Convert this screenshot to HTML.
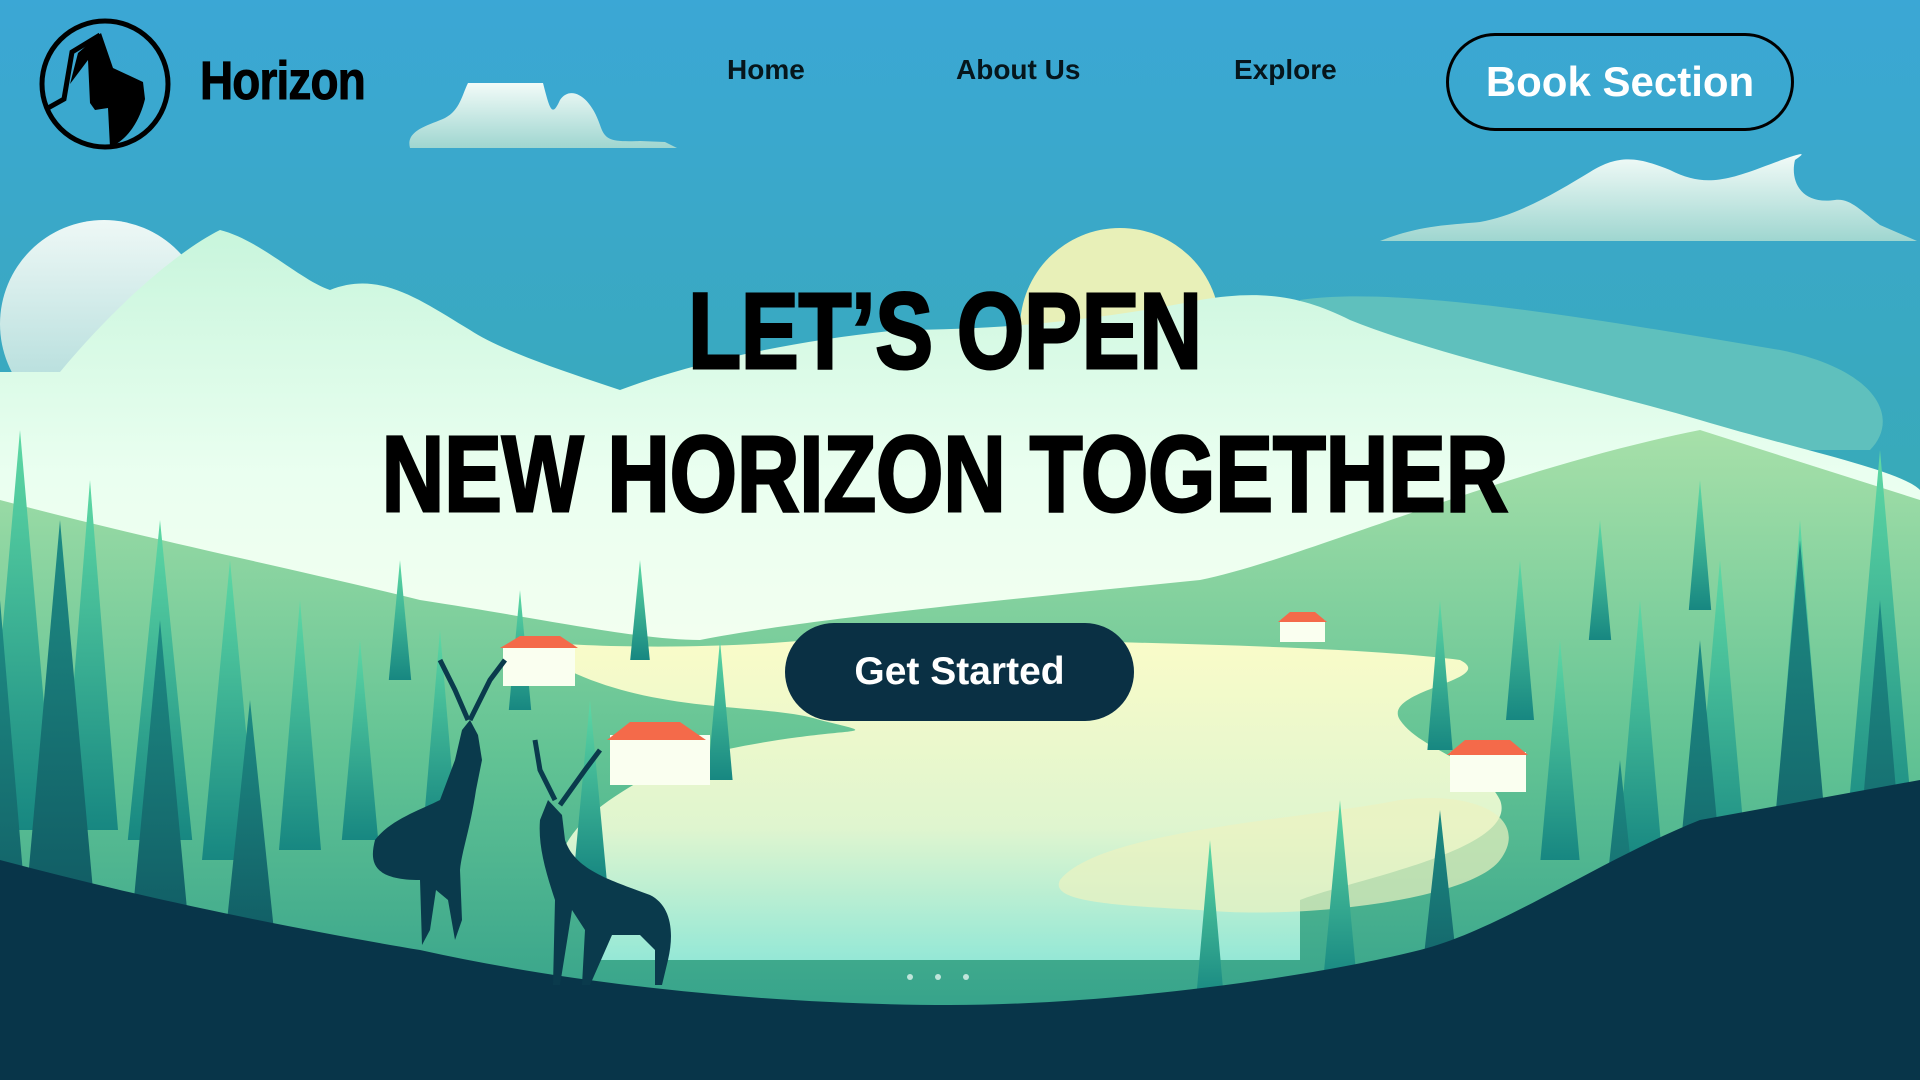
<!DOCTYPE html>
<html><head><meta charset="utf-8"><style>
html,body{margin:0;padding:0;width:1920px;height:1080px;overflow:hidden;background:#083549;}
.wrap{position:relative;width:1920px;height:1080px;}
svg.bg{position:absolute;left:0;top:0;}
.brand{position:absolute;left:200px;top:50px;font-family:"Liberation Sans",sans-serif;font-weight:bold;font-size:54px;color:#000;transform:scaleX(.85);transform-origin:left;letter-spacing:-1px;-webkit-text-stroke:1px #000;}
.nav{position:absolute;top:54px;font-family:"Liberation Sans",sans-serif;font-weight:bold;font-size:28px;color:#06161c;}
.book{position:absolute;left:1446px;top:33px;width:342px;height:92px;border:3px solid #000;border-radius:50px;font-family:"Liberation Sans",sans-serif;font-weight:bold;font-size:42px;color:#fff;text-align:center;line-height:92px;}
.title{position:absolute;left:0;width:1890px;text-align:center;font-family:"Liberation Sans",sans-serif;font-weight:bold;color:#000;font-size:108px;line-height:108px;-webkit-text-stroke:3px #000;}
.title span{display:inline-block;transform:scaleX(.8);}
.gs{position:absolute;left:785px;top:623px;width:349px;height:98px;background:#0a3044;border-radius:50px;color:#fff;font-family:"Liberation Sans",sans-serif;font-weight:bold;font-size:39px;text-align:center;line-height:98px;}
</style></head><body><div class="wrap">
<svg class="bg" width="1920" height="1080" viewBox="0 0 1920 1080">
<defs>
<linearGradient id="sky" x1="0" y1="0" x2="0" y2="1"><stop offset="0" stop-color="#3ba7d5"/><stop offset=".5" stop-color="#38aab6"/><stop offset="1" stop-color="#36a9a9"/></linearGradient>
<linearGradient id="cl" x1="0" y1="0" x2="0" y2="1"><stop offset="0" stop-color="#f2fbf8"/><stop offset="1" stop-color="#9fd6d0"/></linearGradient>
<linearGradient id="moon" x1="0" y1="0" x2="0" y2="1"><stop offset="0" stop-color="#eef8f6"/><stop offset="1" stop-color="#a8d8d6"/></linearGradient>
<linearGradient id="pale" x1="0" y1="0" x2="0" y2="1"><stop offset="0" stop-color="#c8f5dc"/><stop offset=".5" stop-color="#eafff0"/><stop offset="1" stop-color="#f6fff0"/></linearGradient>
<linearGradient id="river" x1="0" y1="0" x2="0" y2="1"><stop offset="0" stop-color="#fbfcc8"/><stop offset=".6" stop-color="#dff5cf"/><stop offset="1" stop-color="#95e8d6"/></linearGradient>
<linearGradient id="hill" x1="0" y1="0" x2="0" y2="1"><stop offset="0" stop-color="#a7e0a9"/><stop offset=".5" stop-color="#62c394"/><stop offset="1" stop-color="#2a9a88"/></linearGradient>
<linearGradient id="tr" x1="0" y1="0" x2="0" y2="1"><stop offset="0" stop-color="#5fd9a5"/><stop offset="1" stop-color="#178781"/></linearGradient>
<linearGradient id="trd" x1="0" y1="0" x2="0" y2="1"><stop offset="0" stop-color="#1e8c84"/><stop offset="1" stop-color="#0b4756"/></linearGradient>
<clipPath id="mc"><rect x="0" y="0" width="400" height="372"/></clipPath>
<polygon id="t" points="0,0 -14,100 14,100"/>
</defs>
<rect width="1920" height="1080" fill="url(#sky)"/>
<path d="M410 148 C405 130 430 125 445 118 C460 110 462 95 468 83 L543 83 C550 110 552 118 560 100 C570 85 590 95 600 125 C605 140 610 142 640 141 L665 142 L677 148Z" fill="url(#cl)"/>
<path d="M1380 241 C1420 225 1450 225 1480 222 C1520 215 1560 190 1590 172 C1620 153 1640 158 1670 170 C1700 185 1720 183 1760 168 C1800 153 1810 150 1795 160 C1790 180 1800 205 1835 200 C1850 198 1860 210 1880 225 L1917 241Z" fill="url(#cl)"/>
<circle cx="104" cy="324" r="104" fill="url(#moon)" clip-path="url(#mc)"/>
<circle cx="1120" cy="328" r="100" fill="#e8f0b8"/>
<path d="M1300 300 C1400 285 1600 320 1780 350 C1880 370 1900 420 1870 450 L1300 450Z" fill="#5fc0bd"/>
<path d="M0 372 L60 372 C120 300 180 250 220 230 C260 240 300 280 330 290 C380 270 420 300 470 330 C500 350 560 370 620 390 C700 360 800 340 900 330 C1000 330 1100 320 1200 300 C1260 290 1300 295 1350 320 C1450 360 1600 390 1700 420 C1800 450 1900 470 1920 490 L1920 720 L0 720Z" fill="url(#pale)"/>
<path d="M0 500 C150 540 300 570 420 600 C550 620 640 640 700 640 C800 620 1000 600 1200 580 C1300 560 1500 470 1700 430 L1920 500 L1920 1080 L0 1080Z" fill="url(#hill)"/>
<path d="M520 640 C600 650 780 650 880 630 C1000 645 1300 640 1460 660 C1500 680 1380 690 1400 720 C1420 750 1480 760 1500 800 C1520 850 1350 880 1300 900 L1300 960 L600 960 L560 860 C570 820 620 790 680 760 C840 720 900 740 820 720 C760 700 620 720 520 640Z" fill="url(#river)"/>
<path d="M1060 880 C1100 830 1300 820 1400 800 C1480 790 1530 820 1500 860 C1470 900 1300 920 1200 910 C1100 905 1050 900 1060 880Z" fill="#ecf2c0" opacity=".7"/>
<g fill="url(#tr)">
<use href="#t" transform="translate(20,430) scale(2.5,4)"/><use href="#t" transform="translate(90,480) scale(2,3.5)"/><use href="#t" transform="translate(160,520) scale(2.3,3.2)"/><use href="#t" transform="translate(230,560) scale(2,3)"/><use href="#t" transform="translate(300,600) scale(1.5,2.5)"/><use href="#t" transform="translate(360,640) scale(1.3,2)"/><use href="#t" transform="translate(440,630) scale(1.2,2)"/><use href="#t" transform="translate(590,700) scale(1.2,1.8)"/><use href="#t" transform="translate(720,640) scale(.9,1.4)"/><use href="#t" transform="translate(400,560) scale(.8,1.2)"/><use href="#t" transform="translate(520,590) scale(.8,1.2)"/><use href="#t" transform="translate(640,560) scale(.7,1)"/>
<use href="#t" transform="translate(1880,450) scale(2.5,4)"/><use href="#t" transform="translate(1800,520) scale(2,3.5)"/><use href="#t" transform="translate(1720,560) scale(2,3.2)"/><use href="#t" transform="translate(1640,600) scale(1.6,2.6)"/><use href="#t" transform="translate(1560,640) scale(1.4,2.2)"/><use href="#t" transform="translate(1340,800) scale(1.2,1.8)"/><use href="#t" transform="translate(1210,840) scale(1,1.6)"/><use href="#t" transform="translate(1520,560) scale(1,1.6)"/><use href="#t" transform="translate(1440,600) scale(.9,1.5)"/><use href="#t" transform="translate(1600,520) scale(.8,1.2)"/><use href="#t" transform="translate(1700,480) scale(.8,1.3)"/>
</g>
<g fill="url(#trd)">
<use href="#t" transform="translate(60,520) scale(3.5,5.5)"/><use href="#t" transform="translate(160,620) scale(3,4.5)"/><use href="#t" transform="translate(250,700) scale(2.6,3.5)"/><use href="#t" transform="translate(0,600) scale(3,5)"/>
<use href="#t" transform="translate(1800,540) scale(3.5,5.5)"/><use href="#t" transform="translate(1880,600) scale(3,5)"/><use href="#t" transform="translate(1700,640) scale(3,4.5)"/><use href="#t" transform="translate(1620,760) scale(2.4,3.2)"/><use href="#t" transform="translate(1440,810) scale(2.2,2.8)"/>
</g>
<path d="M0 860 C150 900 300 930 420 950 C600 990 800 1005 950 1005 C1100 1005 1300 980 1420 950 C1500 930 1600 860 1700 820 L1920 780 L1920 1080 L0 1080Z" fill="#083549"/>
<g fill="#fafff0"><rect x="503" y="648" width="72" height="38"/><rect x="610" y="735" width="100" height="50"/><rect x="1280" y="620" width="45" height="22"/><rect x="1450" y="752" width="76" height="40"/></g>
<g fill="#f46a4a"><polygon points="500,648 520,636 560,636 578,648"/><polygon points="607,740 630,722 680,722 706,740"/><polygon points="1278,622 1290,612 1315,612 1327,622"/><polygon points="1447,755 1465,740 1510,740 1528,755"/></g>
<g fill="#0a3a4c">
<path d="M455 760 L462 730 L470 720 L478 735 L482 760 L476 790 C470 830 462 850 460 870 L462 920 L455 940 L448 900 L436 890 L430 930 L422 945 L420 880 C370 880 370 860 375 840 C390 820 420 810 440 800Z"/>
<path d="M540 820 L548 800 L562 815 L565 840 C575 870 610 880 650 895 C670 905 675 930 668 960 L662 985 L655 985 L655 950 L640 935 L612 935 L590 985 L582 985 L585 930 L572 910 L560 985 L553 985 L555 900 C545 870 538 845 540 820Z"/>
<path d="M468 720 L455 690 L440 660 M470 720 L490 680 L505 660 M555 800 L540 770 L535 740 M560 805 L585 770 L600 750" stroke="#0a3a4c" stroke-width="5" fill="none"/>
</g>
<g fill="#e0f5ee" opacity=".8"><circle cx="910" cy="977" r="3"/><circle cx="938" cy="977" r="3"/><circle cx="966" cy="977" r="3"/></g>
<circle cx="105" cy="84" r="63" fill="none" stroke="#000" stroke-width="5"/>
<path d="M70 84 L78 53 L101 33 L113 68 L143 82 L145 99 C140 120 128 140 110 147 L108 108 L95 110 L90 103 L88 60Z" fill="#000"/>
<path d="M48 108 L64 99 L72 52 L100 35" fill="none" stroke="#000" stroke-width="5"/>
</svg>
<div class="brand">Horizon</div>
<div class="nav" style="left:727px">Home</div>
<div class="nav" style="left:956px">About Us</div>
<div class="nav" style="left:1234px">Explore</div>
<div class="book">Book Section</div>
<div class="title" style="top:277px"><span>LET’S OPEN</span></div>
<div class="title" style="top:420px"><span>NEW HORIZON TOGETHER</span></div>
<div class="gs">Get Started</div>
</div></body></html>
